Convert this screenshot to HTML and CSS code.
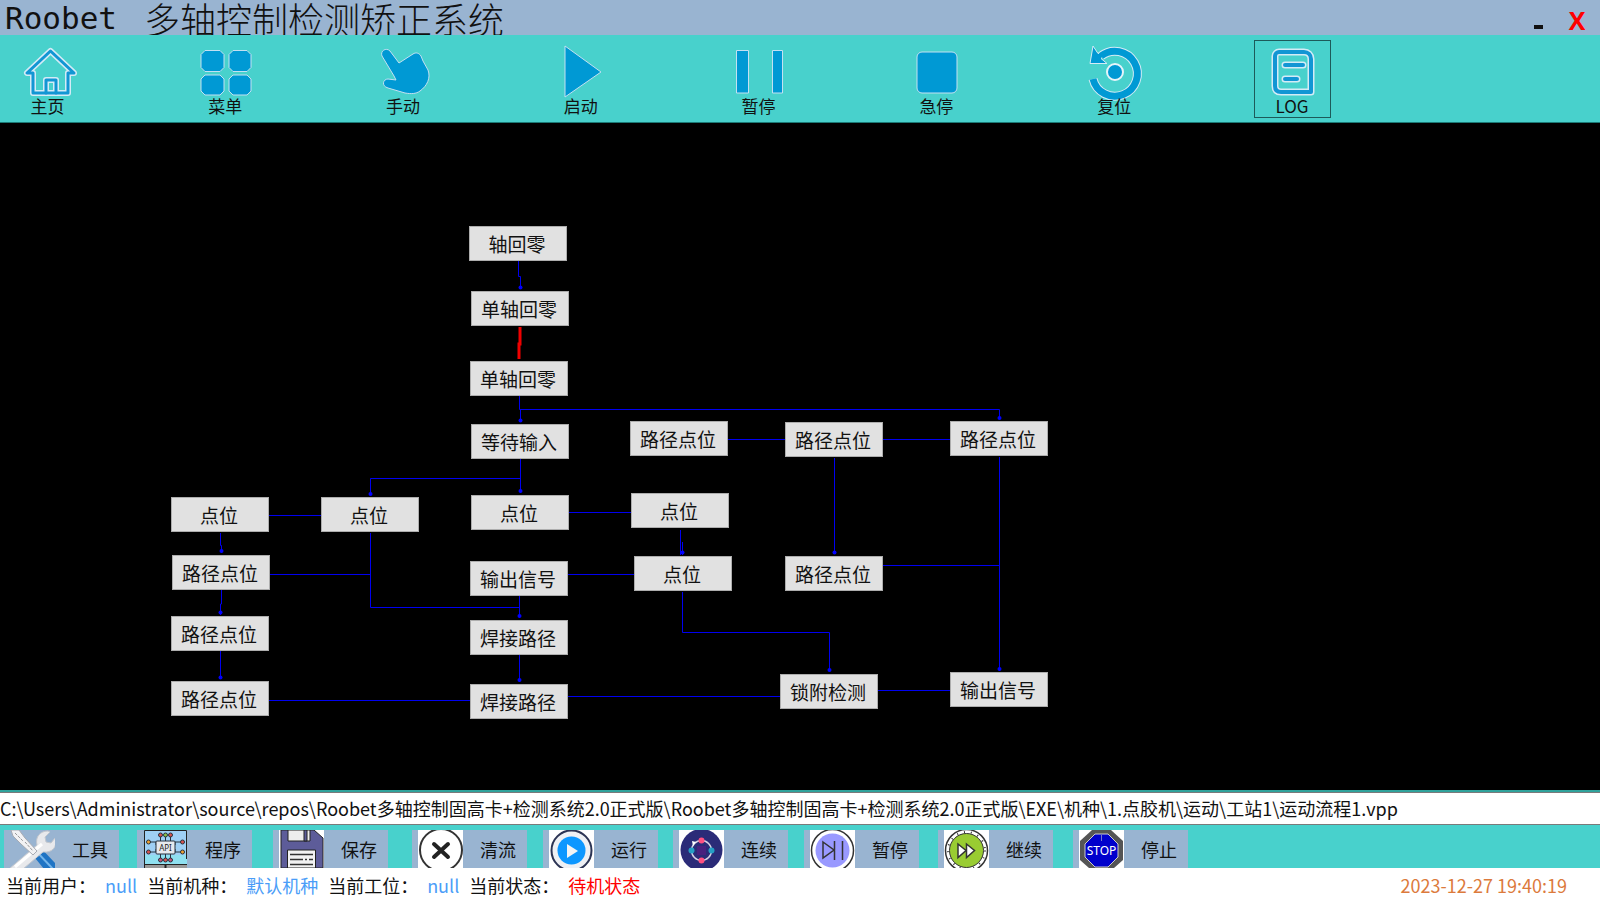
FILE: index.html
```html
<!DOCTYPE html>
<html lang="zh-CN">
<head>
<meta charset="utf-8">
<title>Roobet 多轴控制检测矫正系统</title>
<link rel="stylesheet" href="styles.css">
</head>
<body>
<header class="titlebar">
  <h1 class="title"><span class="title-latin">Roobet</span><span>多轴控制检测矫正系统</span></h1>
  <div class="window-controls">
    <button class="win-btn" type="button" aria-label="最小化"><span class="minimize"></span></button>
    <button class="win-btn close" type="button">X</button>
  </div>
</header>

<nav class="toolbar">
  <button class="tool" type="button">
    <svg class="tool-icon" viewBox="0 0 60 52">
      <g class="halo"><path d="M31.500 6 8 28h6v20h35V28h6Z"/><path d="M27 48V35h10v13"/></g>
      <g class="stroke"><path d="M31.500 6 8 28h6v20h35V28h6Z"/><path d="M27 48V35h10v13"/></g>
    </svg>
    <span>主页</span>
  </button>
  <button class="tool" type="button">
    <svg class="tool-icon solid" viewBox="0 0 60 52">
      <path d="M9 5.500h15l4 4v13l-4 4H9l-4-4v-13ZM37 5.500h14l4 4v13l-4 4H37l-4-4v-13ZM9 30h15l4 4v12l-4 4H9l-4-4V34ZM37 30h14l4 4v12l-4 4H37l-4-4V34Z"/>
    </svg>
    <span>菜单</span>
  </button>
  <button class="tool" type="button">
    <svg class="tool-icon solid" viewBox="0 0 60 52">
      <path d="M8 11C6 6 12 2 16 6L25 18 39 9c3-2 6-1 8 2l2 5 5 9c3 8-1 16-8 21-4 3-9 3-15 2L14 43c-7-2-5-9 0-9l8 1L20 31Z"/>
    </svg>
    <span>手动</span>
  </button>
  <button class="tool" type="button">
    <svg class="tool-icon solid" viewBox="0 0 60 52"><path d="M13 1 49 27 13 52Z"/></svg>
    <span>启动</span>
  </button>
  <button class="tool" type="button">
    <svg class="tool-icon solid" viewBox="0 0 60 52"><path d="M6.500 5.500h12V48h-12ZM42.500 5.500h10V48h-10Z"/></svg>
    <span>暂停</span>
  </button>
  <button class="tool" type="button">
    <svg class="tool-icon solid" viewBox="0 0 60 52"><rect x="10" y="7" width="40" height="41" rx="5"/></svg>
    <span>急停</span>
  </button>
  <button class="tool" type="button">
    <svg class="tool-icon" viewBox="0 0 60 52">
      <g class="ring-halo"><path d="M16 11A22.500 22.500 0 1 1 8 34"/></g>
      <path class="arrow" d="M8 1 5 18.500h17l-6-5 5-4-3-2-5 1Z"/>
      <g class="ring"><path d="M16 11A22.500 22.500 0 1 1 8 34"/></g>
      <circle class="dot" cx="30" cy="27" r="8"/>
    </svg>
    <span>复位</span>
  </button>
  <button class="tool selected" type="button">
    <svg class="tool-icon" viewBox="0 0 60 52">
      <g class="halo wide"><path d="M16 7h25c4 0 7 3 7 7v33H18c-4 0-6-2-6-6V11c0-2 2-4 4-4Z"/><path d="M22 20h18M22 34h12"/></g>
      <g class="stroke wide"><path d="M16 7h25c4 0 7 3 7 7v33H18c-4 0-6-2-6-6V11c0-2 2-4 4-4Z"/><path d="M22 20h18M22 34h12"/></g>
    </svg>
    <span>LOG</span>
  </button>
</nav>

<main class="flow">
  <svg class="wires" width="1100" height="640" viewBox="0 123 1100 640">
    <g class="wire">
      <path d="M518.500 261V276.500H520.500V289"/>
      <path d="M519.500 396V409.500H999.500V419M520.500 409V421"/>
      <path d="M520.500 459V493M520.500 478.500H370.500V494"/>
      <path d="M269 515.500H321M569 512.500H631M270 574.500H370.500M568 574.500H634"/>
      <path d="M220.500 533V545.500H221.500V553"/>
      <path d="M370.500 533V607.500H519.500M519.500 596V618"/>
      <path d="M221.500 590V604H220.500V615M220.500 651V679M519.500 655V682"/>
      <path d="M269 700.500H470M568 696.500H780M878 690.500H950"/>
      <path d="M680.500 530V555M682.500 542V555"/>
      <path d="M682.500 592V632.500H829.500V671"/>
      <path d="M728 439.500H785M883 439.500H950M883 565.500H999.500"/>
      <path d="M834.500 458V553M999.500 457V671"/>
    </g>
    <path class="wire-active" d="M520 327V344H519V359"/>
    <g class="ends">
      <circle cx="520.500" cy="287.500" r="2"/><circle cx="520.500" cy="420.500" r="2"/><circle cx="999.500" cy="418" r="2"/>
      <circle cx="370.500" cy="494" r="2"/><circle cx="520.500" cy="491" r="2"/><circle cx="221.500" cy="551" r="2"/>
      <circle cx="519.500" cy="616" r="2"/><circle cx="220.500" cy="612.500" r="2"/><circle cx="220.500" cy="677.500" r="2"/>
      <circle cx="519.500" cy="680" r="2"/><circle cx="682.500" cy="552.500" r="2"/><circle cx="829.500" cy="670" r="2"/>
      <circle cx="834.500" cy="552.500" r="2"/><circle cx="999.500" cy="669" r="2"/>
    </g>
  </svg>
  <button class="node" type="button" style="left:469px;top:103px">轴回零</button>
  <button class="node" type="button" style="left:471px;top:168px">单轴回零</button>
  <button class="node" type="button" style="left:470px;top:238px">单轴回零</button>
  <button class="node" type="button" style="left:471px;top:301px">等待输入</button>
  <button class="node" type="button" style="left:630px;top:298px">路径点位</button>
  <button class="node" type="button" style="left:785px;top:299px">路径点位</button>
  <button class="node" type="button" style="left:950px;top:298px">路径点位</button>
  <button class="node" type="button" style="left:171px;top:374px">点位</button>
  <button class="node" type="button" style="left:321px;top:374px">点位</button>
  <button class="node" type="button" style="left:471px;top:372px">点位</button>
  <button class="node" type="button" style="left:631px;top:370px">点位</button>
  <button class="node" type="button" style="left:172px;top:432px">路径点位</button>
  <button class="node" type="button" style="left:470px;top:438px">输出信号</button>
  <button class="node" type="button" style="left:634px;top:433px">点位</button>
  <button class="node" type="button" style="left:785px;top:433px">路径点位</button>
  <button class="node" type="button" style="left:171px;top:493px">路径点位</button>
  <button class="node" type="button" style="left:470px;top:497px">焊接路径</button>
  <button class="node" type="button" style="left:171px;top:558px">路径点位</button>
  <button class="node" type="button" style="left:470px;top:561px">焊接路径</button>
  <button class="node" type="button" style="left:780px;top:551px">锁附检测</button>
  <button class="node" type="button" style="left:950px;top:549px">输出信号</button>
</main>

<div class="path-row">
  <input class="path" type="text" aria-label="流程文件" value="C:\Users\Administrator\source\repos\Roobet多轴控制固高卡+检测系统2.0正式版\Roobet多轴控制固高卡+检测系统2.0正式版\EXE\机种\1.点胶机\运动\工站1\运动流程1.vpp">
</div>

<div class="actions">
  <button class="action" type="button">
    <svg class="action-icon" viewBox="0 0 45 38">
      <path d="m21 23 8-7 18 19v4H34Z" fill="#1f74c4"/>
      <path d="m26 21 17 18" stroke="#74b5ea" stroke-width="2"/>
      <path d="M-1 39 27 15c-2-8 3-14 11-14l2 1-5 5 1 5 5 1 4-5c3 9-3 15-12 14L13 39Z" fill="#e8e9ec" stroke="#c3c7ce"/>
      <path d="m5 37 27-23" stroke="#fff" stroke-width="3"/>
      <path d="m1 0 8 0 6 8 12 13-4 4L11 14 3 6Z" fill="#f2f2f4" stroke="#a7abb3"/>
      <path d="m5 3 8 8m2 1 8 9" stroke="#999" stroke-width="1" stroke-dasharray="3 1"/>
    </svg>
    <span>工具</span>
  </button>
  <button class="action" type="button">
    <svg class="action-icon" viewBox="0 0 45 38">
      <path d="M1 0h43v38H1Z" fill="#9fd0f5"/><path d="M1 25h43v9H1Z" fill="#8fe0f0"/>
      <path d="M1.500 38V.500h42V29M1 34.500h43" fill="none" stroke="#222"/>
      <path d="M2 35h42v3H2Z" fill="#999"/><path d="M22.500 34v4" stroke="#222" stroke-width="2"/>
      <path d="M17.500 5v25M22.500 5v25M27.500 5v25M5 12h8v3h19v-3h8M5 22h8v-3h19v3h8" fill="none" stroke="#26323e"/>
      <rect x="13" y="11" width="19" height="13" rx="1" fill="#e6e9ee" stroke="#26323e"/>
      <text class="api-text" x="22.500" y="21" text-anchor="middle">API</text>
      <g stroke="#26323e"><g fill="#d9534f"><circle cx="17.500" cy="5" r="2"/><circle cx="27.500" cy="5" r="2"/><circle cx="22.500" cy="30" r="2"/><circle cx="39.500" cy="12" r="2"/><circle cx="5.500" cy="22" r="2"/></g>
      <g fill="#f0a030"><circle cx="5.500" cy="12" r="2"/><circle cx="39.500" cy="22" r="2"/></g>
      <g fill="#8bc34a"><circle cx="22.500" cy="5" r="2"/></g><g fill="#c2557a"><circle cx="17.500" cy="30" r="2"/><circle cx="27.500" cy="30" r="2"/></g></g>
    </svg>
    <span>程序</span>
  </button>
  <button class="action" type="button">
    <svg class="action-icon" viewBox="0 0 45 38">
      <path d="M0 0h45v38H0Z" fill="#fff"/>
      <path d="M2 0h33l9 8v30H2Z" fill="#5d5c99" stroke="#222" stroke-width="1"/>
      <path d="M9 0h22v11H9Z" fill="#eee" stroke="#222"/><path d="M25 0h3v11h-3Z" fill="#5d5c99" stroke="#222"/>
      <path d="M8.500 20h28v18h-28Z" fill="#f2f2f2" stroke="#222"/>
      <path d="M11 24.500h23M11 29.500h13m2 0h2m2 0h4M11 34.500h23" stroke="#333" stroke-width="1.500"/>
    </svg>
    <span>保存</span>
  </button>
  <button class="action" type="button">
    <svg class="action-icon" viewBox="0 0 45 38">
      <path d="M0 0h45v38H0Z" fill="#fff"/>
      <circle cx="23" cy="20" r="21" fill="#fff" stroke="#333" stroke-width="2"/>
      <path d="m16 14 14 13m0-13L16 27" stroke="#222" stroke-width="4" stroke-linecap="round"/>
    </svg>
    <span>清流</span>
  </button>
  <button class="action" type="button">
    <svg class="action-icon" viewBox="0 0 45 38">
      <path d="M0 0h45v38H0Z" fill="#fff"/>
      <circle cx="22.500" cy="20.500" r="20" fill="#eef0f4" stroke="#2c3454" stroke-width="2"/>
      <circle cx="22.500" cy="20.500" r="14" fill="#0d97ff"/>
      <path d="m18 14 11 7-11 7Z" fill="#f4f4f4"/>
    </svg>
    <span>运行</span>
  </button>
  <button class="action" type="button">
    <svg class="action-icon" viewBox="0 0 45 38">
      <path d="M0 0h45v38H0Z" fill="#fff"/>
      <circle cx="22.500" cy="20" r="21" fill="#2b2b78"/>
      <circle cx="22.500" cy="20.500" r="10" fill="none" stroke="#d5d2e4" stroke-width="1.500"/>
      <path d="M18 16h9v9h-9Z" fill="#48217e"/>
      <circle cx="22.500" cy="10.500" r="3" fill="#ff5082"/><circle cx="22.500" cy="30.500" r="3" fill="#ff5082"/>
      <circle cx="12.500" cy="20.500" r="3" fill="#259fc5"/><circle cx="32.500" cy="20.500" r="3" fill="#259fc5"/>
      <path d="m13 11 4 1-3 4Z" fill="#fff"/>
    </svg>
    <span>连续</span>
  </button>
  <button class="action" type="button">
    <svg class="action-icon" viewBox="0 0 45 38">
      <path d="M0 0h45v38H0Z" fill="#fff"/>
      <circle cx="22.500" cy="20.500" r="21" fill="#fff" stroke="#333" stroke-width="1.500"/>
      <circle cx="22.500" cy="20.500" r="17" fill="#9999ff"/>
      <path d="m13 12 11 8-11 8ZM24.500 11v19M32.500 11v19" fill="none" stroke="#333" stroke-width="1.500"/>
    </svg>
    <span>暂停</span>
  </button>
  <button class="action" type="button">
    <svg class="action-icon" viewBox="0 0 45 38">
      <path d="M0 0h45v38H0Z" fill="#fff"/>
      <circle cx="22.500" cy="20.500" r="21" fill="#fff" stroke="#333" stroke-width="1.500"/>
      <circle cx="22.500" cy="20.500" r="18.500" fill="none" stroke="#333" stroke-width="2" stroke-dasharray="1 6"/>
      <circle cx="22.500" cy="20.500" r="17" fill="#99cc32" stroke="#333"/>
      <path d="m14 14 8 6.500-8 7ZM22.500 14l8 6.500-8 7Z" fill="#fff" stroke="#333" stroke-width="1.500"/>
    </svg>
    <span>继续</span>
  </button>
  <button class="action" type="button">
    <svg class="action-icon" viewBox="0 0 45 38">
      <path d="M0 0h45v38H0Z" fill="#fff"/>
      <path d="M13 0h19l12 11v19L35 38H10L1 30V11Z" fill="#555"/>
      <path d="m16 4 13 0 10 10v13L29 37H16L6 27V14Z" fill="#0000cc" stroke="#ccc"/>
      <path d="M22.500 5v6" stroke="#77c"/>
      <text class="stop-text" x="22.500" y="25" text-anchor="middle">STOP</text>
    </svg>
    <span>停止</span>
  </button>
</div>

<footer class="status">
  <span class="status-label">当前用户：</span><span class="status-value">null</span>
  <span class="status-label">当前机种：</span><span class="status-value">默认机种</span>
  <span class="status-label">当前工位：</span><span class="status-value">null</span>
  <span class="status-label">当前状态：</span><span class="status-value alert">待机状态</span>
  <time class="clock">2023-12-27 19:40:19</time>
</footer>
</body>
</html>
```
FILE: styles.css
```css
* { box-sizing: border-box; }

body {
  margin: 0;
  min-height: 100vh;
  display: flex;
  flex-direction: column;
  background: #fff;
  color: #111;
  font-family: "Noto Sans CJK SC", sans-serif;
  font-size: 18px;
}

button {
  font: inherit;
  color: inherit;
  margin: 0;
  padding: 0;
  border: 0;
  background: none;
}

/* title bar */
.titlebar {
  display: flex;
  justify-content: space-between;
  height: 35px;
  background: #99b4d1;
}

.title {
  display: flex;
  align-items: center;
  gap: 27px;
  margin: 0;
  padding-left: 5px;
  font-family: "AR PL UKai CN", "KaiTi", "Noto Sans CJK SC", sans-serif;
  font-size: 36px;
  font-weight: 300;
  line-height: 36px;
  white-space: nowrap;
}

.title-latin {
  font-family: "DejaVu Sans Mono", monospace;
  font-size: 31px;
}

.window-controls { display: flex; }

.win-btn {
  display: flex;
  align-items: center;
  justify-content: center;
  width: 32px;
  height: 35px;
  padding-top: 5px;
  font-family: "Open Sans", sans-serif;
  font-size: 25px;
  font-weight: 700;
}

.close { width: 46px; color: #f00; }

.minimize {
  width: 9px;
  height: 4px;
  margin-top: 14px;
  background: #111;
}

/* main toolbar */
.toolbar {
  display: grid;
  grid-template-columns: repeat(9, 1fr);
  height: 88px;
  padding-top: 5px;
  background: #48d1cc;
  border-bottom: 1px solid #1c7a76;
}

.tool {
  display: flex;
  flex-direction: column;
  align-items: center;
  width: 77px;
  height: 78px;
  margin-left: 10px;
  padding-top: 4px;
  border: 1px solid transparent;
  font-size: 17px;
  line-height: 18px;
}

.tool span { padding-right: 2px; }

.selected { border-color: #1d5a5a; }

.tool-icon {
  flex: none;
  width: 60px;
  height: 52px;
  overflow: visible;
}

.solid { fill: #0099d4; stroke: #c3e0f2; stroke-width: 1; }
.halo, .stroke { fill: none; stroke-linejoin: round; stroke-linecap: round; }
.halo { stroke: #d4ebf6; stroke-width: 6; }
.stroke { stroke: #1296d4; stroke-width: 3; }
.halo.wide { stroke-width: 7; }
.stroke.wide { stroke-width: 4; }
.ring, .ring-halo { fill: none; stroke: #0099d4; stroke-width: 7; }
.ring-halo { stroke: #d4ebf6; stroke-width: 9; }
.arrow { fill: #0099d4; stroke: #d4ebf6; }
.dot { fill: #0099d4; stroke: #e6f4fa; stroke-width: 2; }

/* flow canvas */
.flow {
  position: relative;
  flex: 1;
  min-height: 640px;
  background: #000;
}

.wires { display: block; position: absolute; left: 0; top: 0; }
.wire { fill: none; stroke: #0000f0; stroke-width: 1; }
.wire-active { fill: none; stroke: #f00000; stroke-width: 3; }
.ends { fill: #00f; }

.node {
  position: absolute;
  width: 98px;
  height: 35px;
  padding-right: 2px;
  background: #e1e1e1;
  border: 1px solid #adadad;
  font-size: 19px;
  line-height: 33px;
}

/* file path */
.path-row {
  padding-top: 2px;
  background: #2fa39c;
}

.path {
  display: block;
  width: 100%;
  height: 33px;
  padding: 0 0 2px;
  border: solid #7a7a7a;
  border-width: 1px 0;
  background: #fff;
  color: #111;
  font: inherit;
}

/* bottom actions */
.actions {
  display: grid;
  grid-template-columns: 133px 136px 139px 131px 130px 131px 134px 135px 115px;
  padding: 5px 4px 0;
  background: #48d1cc;
}

.action {
  display: flex;
  align-items: center;
  gap: 17px;
  width: 115px;
  height: 38px;
  padding-left: 6px;
  background: #99b4d1;
}

.action-icon { flex: none; width: 45px; height: 38px; }
.api-text { font: 8px "Noto Sans", sans-serif; fill: #222; }
.stop-text { font: 12px "Noto Sans", sans-serif; fill: #fff; }

/* status bar */
.status {
  display: flex;
  align-items: center;
  height: 32px;
  padding: 2px 33px 0 6px;
  line-height: 24px;
  white-space: nowrap;
}

.status-label { margin-right: 9px; }
.status-value { margin-right: 10px; color: #4a9df8; }
.alert { color: #f00; }
.clock { margin-left: auto; color: #dc7a3c; }
```
